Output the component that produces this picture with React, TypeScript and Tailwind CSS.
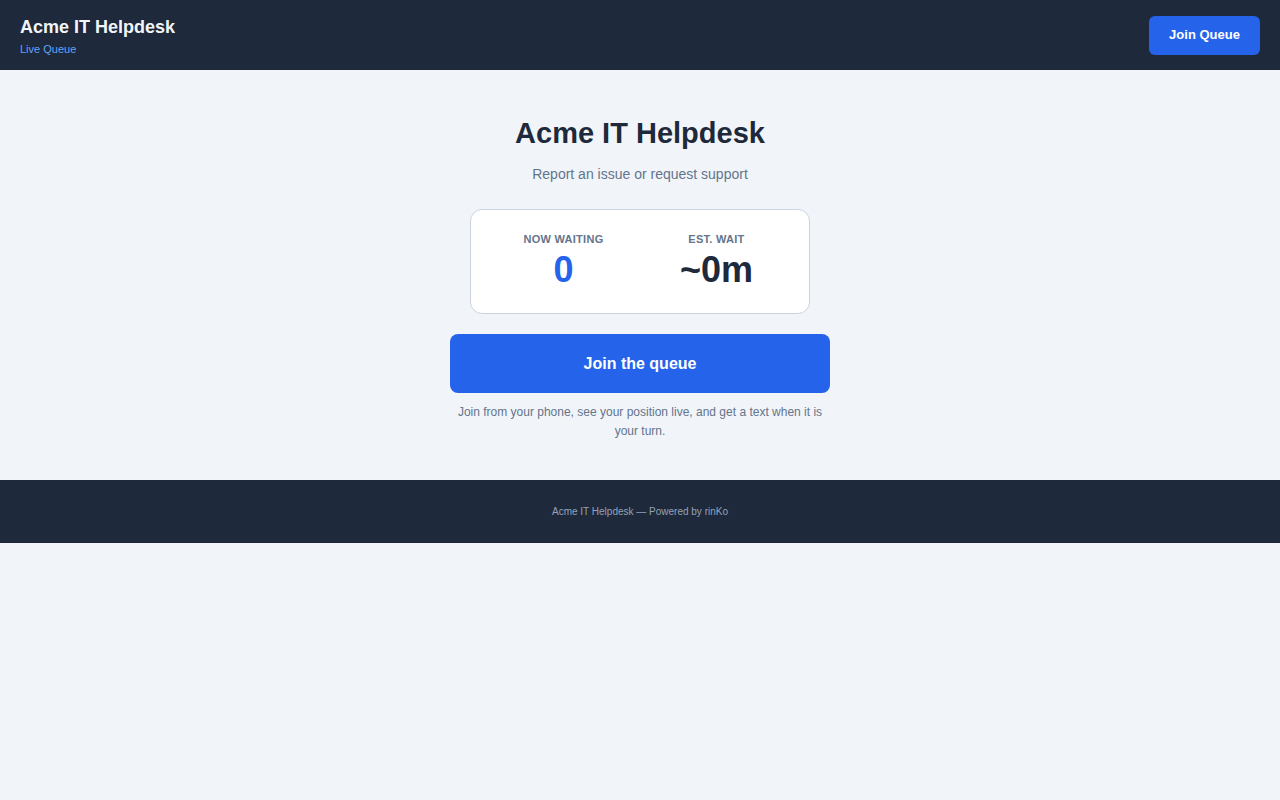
export default function App() {
  return (
    <div
      className="min-h-screen bg-[#f1f5f9]"
      style={{ fontFamily: '"Liberation Sans", Arial, sans-serif' }}
    >
      <header className="h-[70px] bg-[#1e293b] px-5 flex items-center justify-between">
        <div className="flex flex-col">
          <div className="text-[18px] leading-7 font-bold text-[#f1f5f9]">Acme IT Helpdesk</div>
          <div className="text-[11px] leading-4 text-[#60a5fa]">Live Queue</div>
        </div>
        <button className="h-[39px] w-[111px] rounded-md bg-[#2563eb] text-white text-[13px] font-bold">
          Join Queue
        </button>
      </header>

      <main className="pt-[45px] pb-[39px] flex flex-col items-center">
        <h1 className="text-[29px] leading-9 font-bold text-[#1e293b]">Acme IT Helpdesk</h1>
        <p className="mt-3 text-[14px] leading-[22px] text-[#64748b]">Report an issue or request support</p>

        <div className="mt-6 w-[340px] h-[105px] bg-white border border-[#cbd5e1] rounded-xl px-6 pt-[21px] grid grid-cols-2 gap-4 items-start">
          <div className="flex flex-col items-center">
            <div className="text-[11px] leading-4 font-bold tracking-wide text-[#64748b] uppercase">Now waiting</div>
            <div className="mt-[3px] text-[36px] leading-10 font-bold text-[#2563eb]">0</div>
          </div>
          <div className="flex flex-col items-center">
            <div className="text-[11px] leading-4 font-bold tracking-wide text-[#64748b] uppercase">Est. wait</div>
            <div className="mt-[3px] text-[36px] leading-10 font-bold text-[#1e293b]">~0m</div>
          </div>
        </div>

        <button className="mt-5 w-[380px] h-[59px] rounded-lg bg-[#2563eb] text-white text-[16px] font-bold">
          Join the queue
        </button>

        <p className="mt-2.5 w-[380px] text-center text-[12px] leading-[19px] text-[#64748b]">
          Join from your phone, see your position live, and get a text when it is your turn.
        </p>
      </main>

      <footer className="bg-[#1e293b] py-6 text-center text-[10px] leading-[15px] text-[#94a3b8]">
        Acme IT Helpdesk — Powered by rinKo
      </footer>
    </div>
  );
}
